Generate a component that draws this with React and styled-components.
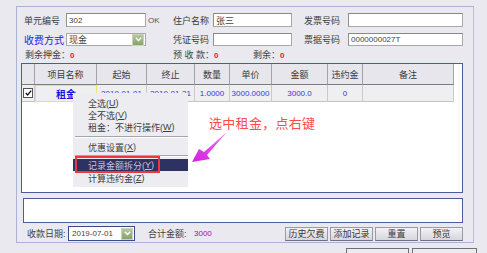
import React from 'react';
import styled, { createGlobalStyle } from 'styled-components';

const GlobalStyle = createGlobalStyle`
    html, body {
        margin: 0;
        padding: 0;
        background: #e9e9ef;
        overflow: hidden;
    }
    body {
        font-family: "Liberation Sans", "Noto Sans CJK SC", sans-serif;
        font-size: 9px;
        color: #3a3a3a;
    }
`;

const Page = styled.div`
    position: relative;
    width: 487px;
    height: 253px;
    overflow: hidden;
    padding-top: 6px;
    box-sizing: border-box;
`;

const Panel = styled.div`
    margin-left: 16px;
    width: 458px;
    height: 237px;
    box-sizing: border-box;
    border: 1px solid #aab3d6;
    border-right-color: #b8c0e0;
    padding: 6px 10px 0 4px;
    display: flex;
    flex-direction: column;
`;

const FormGrid = styled.div`
    display: grid;
    grid-template-columns: 42px 80px 27px 40px 79px 12px 44px 115px;
    grid-template-rows: 14px 13px;
    row-gap: 6px;
    padding-left: 3px;
    align-items: center;
`;

const Label = styled.span`
    color: ${({ blue }) => (blue ? '#1a22f0' : '#3c3c3c')};
    font-size: ${({ blue }) => (blue ? '10px' : '9px')};
    white-space: nowrap;
`;

const Input = styled.div`
    height: 100%;
    box-sizing: border-box;
    background: #fff;
    border: 1px solid #a8a8a8;
    border-top-color: #888;
    border-left-color: #909090;
    font-size: 8px;
    color: #444;
    display: flex;
    align-items: center;
    padding-left: 2px;
    white-space: nowrap;
`;

const SelectBox = styled(Input)`
    justify-content: space-between;
    padding-right: 1px;
    font-size: 9px;
    border-color: ${({ dark }) => (dark ? '#3a4a8a' : '#a8a8a8')};
`;

const DropBtn = styled.div`
    width: 10px;
    height: 10px;
    background: linear-gradient(#b4c89c, #86a26c);
    border: 1px solid #c8d6b8;
    display: flex;
    align-items: center;
    justify-content: center;
`;

const Ok = styled.span`
    font-size: 8px;
    color: #555;
    padding-left: 2px;
`;

const InfoRow = styled.div`
    display: grid;
    grid-template-columns: 148px 80px auto;
    height: 12px;
    margin-top: 2px;
    padding-left: 4px;
    align-items: center;
`;

const Info = styled.span`
    color: #444;
    white-space: nowrap;
`;

const Red = styled.b`
    color: #f01818;
    font-size: 8px;
`;

const Grid = styled.div`
    margin-top: 3px;
    height: 130px;
    box-sizing: border-box;
    border: 1px solid #4c5a9e;
    background: #fff;
    display: flex;
    flex-direction: column;
`;

const cols = '13px 62px 50px 48px 35px 42px 56px 35px 91px';

const HeadRow = styled.div`
    display: grid;
    grid-template-columns: ${cols};
    height: 21px;
`;

const HeadCell = styled.div`
    background: #e6e6ec;
    border-right: 1px solid #a4a4a8;
    border-bottom: 1px solid #7c7c80;
    display: flex;
    align-items: center;
    justify-content: center;
    color: #3a3a3a;
    font-size: 9px;
`;

const DataRow = styled.div`
    display: grid;
    grid-template-columns: ${cols};
    height: 16px;
`;

const Cell = styled.div`
    background: #efeff1;
    border-right: 1px solid #cacacc;
    border-bottom: 1px solid #c4c4c6;
    display: flex;
    align-items: center;
    justify-content: center;
    color: #3434ee;
    font-size: 8px;
    box-sizing: border-box;
`;

const FocusCell = styled(Cell)`
    border: 1px dotted #3c3ca8;
    outline: 1px solid #f0e070;
    outline-offset: -1px;
    font-weight: bold;
    font-size: 10px;
    color: #1414e0;
`;

const Check = styled.div`
    width: 8px;
    height: 8px;
    background: #fff;
    border: 1px solid #555;
    display: flex;
    align-items: center;
    justify-content: center;
`;

const Memo = styled.div`
    margin: 5px 0 0 2px;
    height: 25px;
    box-sizing: border-box;
    border: 1px solid #4c5a9e;
    background: #fff;
`;

const BottomRow = styled.div`
    margin-top: 3px;
    height: 15px;
    display: flex;
    align-items: center;
    padding-left: 6px;
`;

const DateLabel = styled.span`
    width: 41px;
    color: #444;
`;

const DateBox = styled(SelectBox)`
    width: 67px;
    font-size: 8px;
    padding-left: 3px;
`;

const TotalLabel = styled.span`
    margin-left: 13px;
    width: 46px;
    color: #444;
`;

const Total = styled.span`
    color: #8a1a9a;
    font-size: 8px;
`;

const Buttons = styled.div`
    margin-left: auto;
    display: flex;
    gap: 2px;
`;

const Button = styled.div`
    width: 43px;
    height: 14px;
    box-sizing: border-box;
    border: 1px solid #9a9aa4;
    border-bottom-color: #707078;
    background: linear-gradient(#f2f2f6, #d6d6de);
    display: flex;
    align-items: center;
    justify-content: center;
    color: #3a3a3a;
    font-size: 9px;
`;

const Footer = styled.div`
    display: flex;
    justify-content: flex-end;
    gap: 3px;
    margin-top: 5px;
    padding-right: 10px;
`;

const FooterButton = styled.div`
    width: ${({ w }) => w}px;
    height: 20px;
    box-sizing: border-box;
    border: 1px solid #707078;
    border-bottom: none;
    background: #ebebf0;
`;

const Menu = styled.div`
    position: absolute;
    left: 73px;
    top: 93px;
    width: 115px;
    padding: 4px 0 2px;
    background: #ededf1;
    display: flex;
    flex-direction: column;
`;

const MenuItem = styled.div`
    position: relative;
    height: ${({ h }) => h || 12}px;
    padding-left: 15px;
    display: flex;
    align-items: center;
    color: ${({ active }) => (active ? '#c4c6dc' : '#3c3c3c')};
    background: ${({ active }) => (active ? '#2e3262' : 'transparent')};
    font-size: 9px;
    white-space: nowrap;
`;

const Separator = styled.div`
    height: ${({ h }) => h}px;
    display: flex;
    align-items: center;
    padding-left: 2px;

    &::after {
        content: '';
        flex: 1;
        border-top: 1px solid #a4a4aa;
        border-bottom: 1px solid #fff;
    }
`;

const RedBox = styled.div`
    position: absolute;
    left: 2px;
    top: -3px;
    width: 85px;
    height: 17px;
    box-sizing: border-box;
    border: 2px solid #e83a3a;
`;

const Note = styled.div`
    position: absolute;
    left: 209px;
    top: 114px;
    font-family: "Noto Sans CJK SC", sans-serif;
    font-size: 13px;
    line-height: 17px;
    color: #ff4a4a;
    letter-spacing: 0.3px;
`;

const Arrow = styled.svg`
    position: absolute;
    left: 0;
    top: 0;
    pointer-events: none;
`;

const u = (s) => <span style={{ textDecoration: 'underline' }}>{s}</span>;

const Chevron = () => (
    <svg width="7" height="5" viewBox="0 0 7 5">
        <path d="M0.8 0.8 L3.5 3.6 L6.2 0.8" fill="none" stroke="#fff" strokeWidth="1.4" />
    </svg>
);

const App = () => {
    const headers = ['', '项目名称', '起始', '终止', '数量', '单价', '金额', '违约金', '备注'];
    return (
        <Page>
            <GlobalStyle />
            <Panel>
                <FormGrid>
                    <Label>单元编号</Label>
                    <Input>302</Input>
                    <Ok>OK</Ok>
                    <Label>住户名称</Label>
                    <Input style={{ fontSize: '9px' }}>张三</Input>
                    <span />
                    <Label>发票号码</Label>
                    <Input />

                    <Label blue>收费方式</Label>
                    <SelectBox>现金<DropBtn><Chevron /></DropBtn></SelectBox>
                    <span />
                    <Label>凭证号码</Label>
                    <Input />
                    <span />
                    <Label>票据号码</Label>
                    <Input>0000000027T</Input>
                </FormGrid>
                <InfoRow>
                    <Info>剩余押金：<Red>0</Red></Info>
                    <Info>预 收 款：<Red>0</Red></Info>
                    <Info>剩余：<Red>0</Red></Info>
                </InfoRow>
                <Grid>
                    <HeadRow>
                        {headers.map((h, i) => (
                            <HeadCell key={i}>{h}</HeadCell>
                        ))}
                    </HeadRow>
                    <DataRow>
                        <Cell>
                            <Check>
                                <svg width="7" height="6" viewBox="0 0 7 6">
                                    <path d="M0.8 3 L2.6 5 L6.2 0.6" fill="none" stroke="#111" strokeWidth="1.3" />
                                </svg>
                            </Check>
                        </Cell>
                        <FocusCell>租金</FocusCell>
                        <Cell>2019-01-01</Cell>
                        <Cell>2019-01-31</Cell>
                        <Cell>1.0000</Cell>
                        <Cell>3000.0000</Cell>
                        <Cell>3000.0</Cell>
                        <Cell>0</Cell>
                        <Cell />
                    </DataRow>
                </Grid>
                <Memo />
                <BottomRow>
                    <DateLabel>收款日期:</DateLabel>
                    <DateBox dark>2019-07-01<DropBtn><Chevron /></DropBtn></DateBox>
                    <TotalLabel>合计金额:</TotalLabel>
                    <Total>3000</Total>
                    <Buttons>
                        <Button>历史欠费</Button>
                        <Button>添加记录</Button>
                        <Button>重置</Button>
                        <Button>预览</Button>
                    </Buttons>
                </BottomRow>
            </Panel>
            <Footer>
                <FooterButton w={63} />
                <FooterButton w={65} />
            </Footer>

            <Menu>
                <MenuItem>全选({u('U')})</MenuItem>
                <MenuItem>全不选({u('V')})</MenuItem>
                <MenuItem>租金：不进行操作({u('W')})</MenuItem>
                <Separator h={8} />
                <MenuItem>优惠设置({u('X')})</MenuItem>
                <Separator h={6} />
                <MenuItem active>
                    记录金额拆分({u('Y')})
                    <RedBox />
                </MenuItem>
                <MenuItem h={14}>计算违约金({u('Z')})</MenuItem>
            </Menu>

            <Note>选中租金，点右键</Note>
            <Arrow width="487" height="253">
                <defs>
                    <linearGradient id="ag" x1="1" y1="0" x2="0" y2="1">
                        <stop offset="0" stopColor="#f070f0" />
                        <stop offset="1" stopColor="#d020e0" />
                    </linearGradient>
                </defs>
                <polygon
                    points="192,162 199,149 204,152 227,132 207,155 210,159"
                    fill="url(#ag)"
                />
            </Arrow>
        </Page>
    );
};

export default App;
